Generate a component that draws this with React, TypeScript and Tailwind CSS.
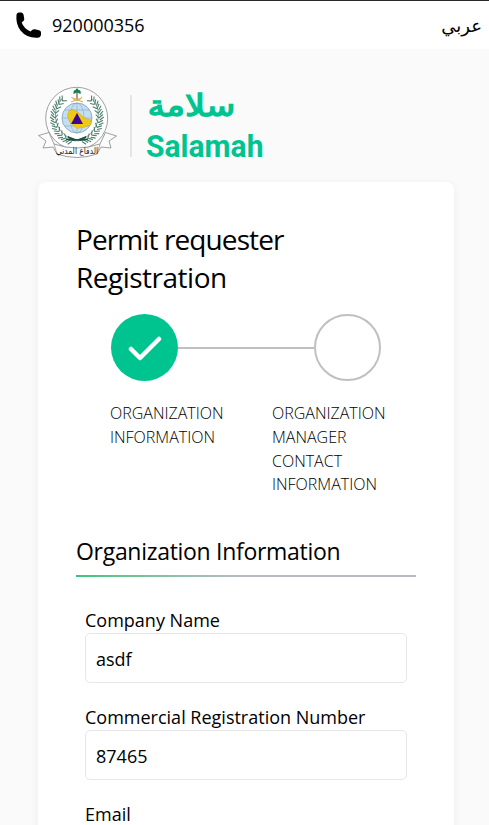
import React from "react";

const LEAVES = [0, 1, 2, 3, 4, 5, 6, 7, 8, 9, 10];

function Branch() {
  return (
    <g stroke="#4c7f6e" fill="none">
      <path d="M79 141 C65 139 55 128 55.500 114 C55.500 108 58 103 62 99" strokeWidth="0.7" />
      {LEAVES.map((i) => {
        const deg = 108 + i * 12;
        const a = (deg * Math.PI) / 180;
        const x = 77 + Math.cos(a) * 22;
        const y = 118 + Math.sin(a) * 23;
        return (
          <g key={i} transform={`translate(${x} ${y}) rotate(${deg})`}>
            <path d="M0 0 L4 3.500 M0 0 L-3 3.500 M1 -2 L5 1" strokeWidth="1.1" />
          </g>
        );
      })}
    </g>
  );
}

function Logo() {
  return (
    <svg className="block overflow-visible" width="240" height="82" viewBox="36 80 240 82" role="img" aria-label="Salamah">
      <circle cx="76.700" cy="118.300" r="31" fill="#fff" stroke="#888" strokeWidth="0.8" />
      <Branch />
      <g transform="translate(153.800 0) scale(-1 1)">
        <Branch />
      </g>
      <circle cx="77" cy="118" r="15" fill="#c5dff2" stroke="#7e9db8" strokeWidth="0.8" />
      <g fill="none" stroke="#87a8c8" strokeWidth="0.6">
        <ellipse cx="77" cy="118" rx="7" ry="15" />
        <path d="M62 118h30M64.500 110h25M64.500 126h25M77 103v30" />
      </g>
      <path d="M69 110.500 L73 109.500 L79 113 L84 118 L91 120 L90.500 125 L83 127.500 L77 128.500 L73 125 L69 121 L67.500 115Z" fill="#f0ca12" stroke="#c9a81b" strokeWidth="0.500" />
      <path d="M77 113 L83 124 H71Z" fill="#3d0794" />
      <path d="M71.500 97 Q77 104 82 97 M71 102 L81.500 98 M83 102 L72.500 98" stroke="#d5b657" strokeWidth="1.1" fill="none" />
      <path d="M77 99 V91" stroke="#985331" strokeWidth="1.200" />
      <path d="M73.500 94 Q73 90 75.500 90 Q77 86.500 78.500 90 Q81.500 90 80.500 94 L77 92.500Z" fill="#168252" />
      <path d="M66 139 Q76 142 86 137 M68 137 Q78 142 88 139" stroke="#204e42" strokeWidth="1.500" fill="none" />
      <path d="M38.500 135.500 L49 132.500 L54 144 Q77 152 100 144 L105.500 132.500 L116.500 136 L109 141 L111 148 L101 147 L97 154 Q77 161 57 154 L53 147 L43 148 L46 141Z" fill="#fcfcfc" stroke="#888" strokeWidth="0.8" />
      <path d="M54 144 L57 154 M100 144 L97 154" stroke="#888" strokeWidth="0.7" />
      <text x="77" y="154" textAnchor="middle" direction="rtl" textLength="42" lengthAdjust="spacingAndGlyphs" fill="#222" className="font-['DejaVu_Sans',sans-serif] text-[9px]">الدفاع المدني</text>
      <rect x="130" y="95" width="2" height="62" fill="#e5e5e5" />
      <text x="191.500" y="115.500" textAnchor="middle" direction="rtl" textLength="88" lengthAdjust="spacingAndGlyphs" fill="#00c48f" stroke="#00c48f" strokeWidth="1.3" className="font-['DejaVu_Sans',sans-serif] text-[30px]">سلامة</text>
      <text x="146" y="156.500" textLength="117.500" lengthAdjust="spacingAndGlyphs" fill="#00c48f" className="font-['Roboto',sans-serif] text-[31px] font-bold">Salamah</text>
    </svg>
  );
}

function Field({ label, value }: { label: string; value: string }) {
  return (
    <div className="mb-[22px]">
      <label className="block h-[25px] text-[18px] leading-6 whitespace-nowrap">{label}</label>
      <input
        className="block h-[50px] w-full rounded-[5px] border border-[#e5e7eb] bg-white px-2.5 pt-0.5 text-[18px] outline-none"
        defaultValue={value}
      />
    </div>
  );
}

export default function App() {
  return (
    <div className="h-[825px] overflow-hidden bg-[#fafafa] font-['Open_Sans','Noto_Sans',sans-serif] text-black">
      <header className="flex h-[49px] items-center justify-between border-t border-[#29292b] bg-white pr-[7px] pl-[15px]">
        <div className="flex items-center">
          <svg width="27" height="27" viewBox="0 0 27 27" aria-hidden="true">
            <path d="M1.500 2.500 Q2 .8 4 .6 L6.500 .5 Q8 .8 8.500 2.500 L9.300 7 Q9.300 8.500 7.800 9.500 L6.700 10.500 Q8.800 16.500 15.500 19.500 L17.500 17.800 Q18.500 17 20 17.300 L24 18.200 Q26 18.800 26 20.500 V23 Q25.500 25.500 23 25.700 Q12 26.500 5.500 18.500 Q.5 12 1.500 2.500Z" fill="#000" />
          </svg>
          <span className="ml-[10px] pb-px text-[18px] leading-6">920000356</span>
        </div>
        <span dir="rtl" className="pt-0.5 font-['DejaVu_Sans',sans-serif] text-[18px] leading-6">عربي</span>
      </header>
      <div className="pt-[31px] pl-9">
        <Logo />
      </div>
      <main className="mt-5 mr-[35px] ml-[38px] h-[700px] rounded-lg bg-white px-[38px] pt-[38px] shadow-[0_2px_10px_rgba(0,0,0,0.06)]">
        <h1 className="text-[28px] leading-[38px] font-normal whitespace-nowrap">
          <span className="block tracking-[-0.9px]">Permit requester</span>
          <span className="block tracking-[-0.5px]">Registration</span>
        </h1>
        <div className="mt-[18px] ml-[35px] flex w-[270px] items-center">
          <div className="flex size-[67px] items-center justify-center rounded-full bg-[#00c48f]">
            <svg width="34" height="26" viewBox="0 0 34 26" fill="none" aria-hidden="true">
              <path d="M3 14 L12 23 L31 4" stroke="#fff" strokeWidth="4.500" strokeLinecap="round" strokeLinejoin="round" />
            </svg>
          </div>
          <div className="h-0.5 flex-1 bg-[#c0c0c0]" />
          <div className="size-[67px] rounded-full border-2 border-[#c0c0c0]" />
        </div>
        <div className="mt-[21px] flex pl-[34px] text-[16px] leading-[23.800px] font-light">
          <p className="w-[162px]">
            ORGANIZATION
            <br />
            INFORMATION
          </p>
          <p>
            ORGANIZATION
            <br />
            MANAGER
            <br />
            CONTACT
            <br />
            INFORMATION
          </p>
        </div>
        <h2 className="mt-[37.600px] h-[40px] text-[23px] leading-8 font-normal tracking-[-0.3px] whitespace-nowrap">Organization Information</h2>
        <div className="h-0.5 bg-linear-to-r from-[#35c57d] to-[#b8bac5] to-50%" />
        <div className="px-[9px] pt-[31px]">
          <Field label="Company Name" value="asdf" />
          <Field label="Commercial Registration Number" value="87465" />
          <Field label="Email" value="" />
        </div>
      </main>
    </div>
  );
}
